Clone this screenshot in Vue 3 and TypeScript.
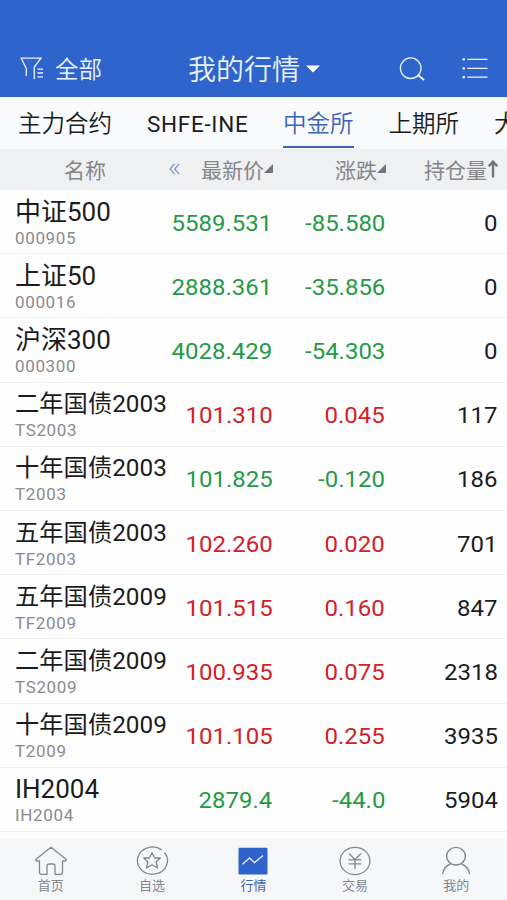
<script setup lang="ts">
interface Quote {
  name: string
  code: string
  price: string
  change: string
  position: string
}

const quotes: Quote[] = [
  { name: '中证500', code: '000905', price: '5589.531', change: '-85.580', position: '0' },
  { name: '上证50', code: '000016', price: '2888.361', change: '-35.856', position: '0' },
  { name: '沪深300', code: '000300', price: '4028.429', change: '-54.303', position: '0' },
  { name: '二年国债2003', code: 'TS2003', price: '101.310', change: '0.045', position: '117' },
  { name: '十年国债2003', code: 'T2003', price: '101.825', change: '-0.120', position: '186' },
  { name: '五年国债2003', code: 'TF2003', price: '102.260', change: '0.020', position: '701' },
  { name: '五年国债2009', code: 'TF2009', price: '101.515', change: '0.160', position: '847' },
  { name: '二年国债2009', code: 'TS2009', price: '100.935', change: '0.075', position: '2318' },
  { name: '十年国债2009', code: 'T2009', price: '101.105', change: '0.255', position: '3935' },
  { name: 'IH2004', code: 'IH2004', price: '2879.4', change: '-44.0', position: '5904' },
]

const tabs: string[] = ['主力合约', 'SHFE-INE', '中金所', '上期所', '大']
const activeTab = '中金所'

const trend = (q: Quote): string => (q.change.startsWith('-') ? 'down' : 'up')
</script>

<template>
  <div class="screen">
    <header class="topbar">
      <div class="filter">
        <svg width="26" height="24" viewBox="0 0 26 24" fill="none" stroke="currentColor" stroke-width="1.3">
          <path d="M6.3 19V11.5L1.2 1.2H21L14.3 10V22" />
          <path d="M17.5 12.2h5.5M17.5 16h5.5M17.5 19.8h5.5" />
        </svg>
        <span>全部</span>
      </div>
      <div class="title">
        <span>我的行情</span>
        <svg width="14" height="8" viewBox="0 0 14 8"><path d="M0 0.5H14L7 7.5Z" fill="currentColor" /></svg>
      </div>
      <div class="actions">
        <svg width="26" height="24" viewBox="0 0 26 24" fill="none" stroke="currentColor">
          <circle cx="11.7" cy="11.2" r="10.3" stroke-width="1.3" />
          <path d="M18.5 17.8L25 23" stroke-width="2" />
        </svg>
        <svg width="26" height="22" viewBox="0 0 26 22" fill="none" stroke="currentColor">
          <path d="M5.3 2.3H25.5M5.3 11.3H25.5M5.3 20.2H25.5" stroke-width="1.3" />
          <path d="M0.5 2.3h2.4M0.5 11.3h2.4M0.5 20.2h2.4" stroke-width="2.2" />
        </svg>
      </div>
    </header>

    <nav class="tabs">
      <div v-for="tab in tabs" :key="tab" class="tab" :class="{ active: tab === activeTab }">{{ tab }}</div>
    </nav>

    <div class="columns">
      <span class="col-name">名称</span>
      <svg class="back" width="11" height="12" viewBox="0 0 11 12" fill="none" stroke="#7d92d6" stroke-width="1.2">
        <path d="M5.5 0.8L1 6L5.5 11.2M10.2 0.8L5.7 6L10.2 11.2" />
      </svg>
      <span class="col-price">最新价<svg width="9" height="9" viewBox="0 0 9 9"><path d="M9 0V9H0Z" fill="#737476" /></svg></span>
      <span class="col-change">涨跌<svg width="9" height="9" viewBox="0 0 9 9"><path d="M9 0V9H0Z" fill="#737476" /></svg></span>
      <span class="col-position">持仓量<svg class="arrow" width="10" height="18" viewBox="0 0 10 18" fill="none" stroke="#737476" stroke-width="2.4"><path d="M5 17.5V2M0.8 6.2L5 1.6L9.2 6.2" /></svg></span>
    </div>

    <main class="list">
      <div v-for="q in quotes" :key="q.name" class="row">
        <div class="instrument">
          <div class="name" :class="{ compact: q.name.length > 6 }">{{ q.name }}</div>
          <div class="code">{{ q.code }}</div>
        </div>
        <div class="num" :class="trend(q)"><span>{{ q.price }}</span></div>
        <div class="num" :class="trend(q)"><span>{{ q.change }}</span></div>
        <div class="num"><span>{{ q.position }}</span></div>
      </div>
    </main>

    <footer class="bottombar">
      <div class="item">
        <svg width="34" height="30" viewBox="0 0 34 30" fill="none" stroke="currentColor" stroke-width="1.3" stroke-linejoin="round">
          <path d="M17 1.2L32 13.2Q33 14.8 31 15H28.5V26.5Q28.5 28.3 26.5 28.3H21V20.5Q21 18 18.7 18H15.3Q13 18 13 20.5V28.3H7.5Q5.5 28.3 5.5 26.5V15H3Q1 14.8 2 13.2Z" />
        </svg>
        <span>首页</span>
      </div>
      <div class="item">
        <svg width="34" height="30" viewBox="0 0 34 30" fill="none" stroke="currentColor" stroke-width="1.3" stroke-linejoin="round">
          <path d="M29.5 6.5A15 13.6 0 1 1 26.7 3.9" />
          <path d="M17 6.8L19.6 12H25.3L21.1 16L22.6 22L17 18.8L11.4 22L12.9 16L8.7 12H14.4Z" />
        </svg>
        <span>自选</span>
      </div>
      <div class="item current">
        <svg width="34" height="30" viewBox="0 0 34 30" fill="none">
          <rect x="2.5" y="1.8" width="29" height="26.6" rx="1.2" fill="#2f62cc" />
          <path d="M6.5 18.2L13.5 12L18.5 16.5L27 9.5" stroke="#e4edff" stroke-width="1.4" />
        </svg>
        <span>行情</span>
      </div>
      <div class="item">
        <svg width="34" height="30" viewBox="0 0 34 30" fill="none" stroke="currentColor" stroke-width="1.3">
          <ellipse cx="17" cy="15" rx="14.9" ry="13.6" />
          <path d="M11 7.5L17 13.5L23 7.5M17 13.5V23M10.5 13.8H23.5M10.5 17.8H23.5" />
        </svg>
        <span>交易</span>
      </div>
      <div class="item">
        <svg width="34" height="30" viewBox="0 0 34 30" fill="none" stroke="currentColor" stroke-width="1.4">
          <ellipse cx="17" cy="10.2" rx="9.4" ry="8.8" />
          <path d="M3.6 28Q4.5 20.5 11.5 18M22.5 18Q29.5 20.5 30.6 28" />
        </svg>
        <span>我的</span>
      </div>
    </footer>
  </div>
</template>

<style>
body {
  margin: 0;
}
</style>

<style scoped>
.screen {
  width: 507px;
  height: 900px;
  overflow: hidden;
  display: flex;
  flex-direction: column;
  background: #fefefe;
  color: #1c1c1e;
  font-family: Roboto, "Noto Sans CJK SC", sans-serif;
}
svg {
  display: block;
  flex: none;
}
.topbar {
  box-sizing: border-box;
  height: 97px;
  flex: none;
  padding: 40px 19px 0 20px;
  display: grid;
  grid-template-columns: 168px 1fr 89px;
  align-items: center;
  background: #3064cd;
  color: #e9f2ff;
  font-weight: 350;
}
.filter {
  display: flex;
  align-items: center;
  gap: 9px;
  font-size: 23.5px;
}
.filter span,
.title span {
  margin-top: -2px;
}
.title {
  display: flex;
  align-items: center;
  gap: 6px;
  font-size: 28px;
}
.title svg {
  color: #fff;
}
.actions {
  display: flex;
  justify-content: space-between;
}
.tabs {
  height: 52px;
  flex: none;
  display: flex;
  gap: 35px;
  padding-left: 18px;
  background: #f8fafb;
  overflow: hidden;
}
.tab {
  box-sizing: border-box;
  height: 51px;
  flex: none;
  white-space: nowrap;
  font-size: 23.5px;
  line-height: 54px;
  font-weight: 350;
}
.tab:nth-child(2) {
  width: 101px;
  font-size: 22.5px;
  font-weight: 400;
  letter-spacing: 0.7px;
}
.tab.active {
  color: #3e64b8;
  border-bottom: 2px solid #3e64b8;
}
.columns {
  box-sizing: border-box;
  height: 41px;
  flex: none;
  padding-bottom: 2px;
  display: grid;
  grid-template-columns: 106px 74px 93px 113px 112px;
  align-items: center;
  justify-items: end;
  background: #eff0f2;
  color: #85868a;
  font-size: 21px;
}
.columns span {
  display: flex;
  align-items: center;
  white-space: nowrap;
}
.columns .arrow {
  margin-left: 1px;
}
.list {
  height: 648px;
  flex: none;
  overflow: hidden;
}
.row {
  box-sizing: border-box;
  height: 64.2px;
  padding: 2px 0 0 15px;
  display: grid;
  grid-template-columns: 157.5px 100px 112.5px 112.5px;
  align-items: center;
  border-bottom: 1.5px solid #f0f0f2;
}
.name {
  font-size: 26px;
  line-height: 30px;
  white-space: nowrap;
}
.name.compact {
  font-size: 24.3px;
}
.code {
  font-size: 17px;
  line-height: 22px;
  letter-spacing: 0.65px;
  color: #8b8b8e;
}
.num {
  font-size: 22.2px;
  text-align: right;
  white-space: nowrap;
}
.num span {
  display: inline-block;
  transform: scaleX(1.08);
  transform-origin: right center;
}
.up {
  color: #d42027;
}
.down {
  color: #249a45;
}
.bottombar {
  flex: 1;
  display: grid;
  grid-template-columns: repeat(5, 1fr);
  background: #f5f7f9;
}
.item {
  display: flex;
  flex-direction: column;
  align-items: center;
  padding-top: 8px;
  color: #85878b;
  font-size: 13px;
  line-height: 20px;
}
.item.current {
  color: #3e64b8;
}
</style>
